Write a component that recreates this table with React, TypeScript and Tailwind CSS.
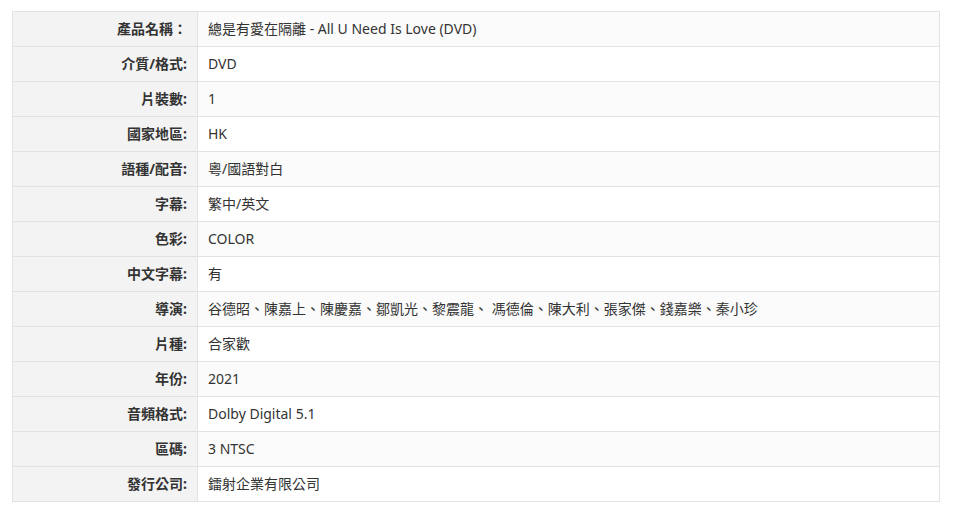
import React from 'react';

const rows: [string, string][] = [
  ['產品名稱：', '總是有愛在隔離 - All U Need Is Love (DVD)'],
  ['介質/格式:', 'DVD'],
  ['片裝數:', '1'],
  ['國家地區:', 'HK'],
  ['語種/配音:', '粵/國語對白'],
  ['字幕:', '繁中/英文'],
  ['色彩:', 'COLOR'],
  ['中文字幕:', '有'],
  ['導演:', '谷德昭、陳嘉上、陳慶嘉、鄒凱光、黎震龍、 馮德倫、陳大利、張家傑、錢嘉樂、秦小珍'],
  ['片種:', '合家歡'],
  ['年份:', '2021'],
  ['音頻格式:', 'Dolby Digital 5.1'],
  ['區碼:', '3 NTSC'],
  ['發行公司:', '鐳射企業有限公司'],
];

export default function App() {
  return (
    <div
      className="w-[954px] h-[517px] bg-white pt-[11px] pl-[12px] text-[14px] text-[#333]"
      style={{ fontFamily: '"Noto Sans", "Noto Sans CJK TC", sans-serif' }}
    >
      <table className="w-[928px] border-collapse border border-[#e2e2e2]">
        <tbody>
          {rows.map(([label, value], i) => (
            <tr key={label} className={i % 2 === 0 ? 'bg-[#fbfbfb]' : 'bg-white'}>
              <td className="w-[185px] h-[35px] bg-[#f3f3f3] border border-[#e2e2e2] text-right font-bold pr-[10px] align-middle leading-none">
                {label}
              </td>
              <td className="h-[35px] border border-[#e2e2e2] pl-[10px] align-middle leading-none">
                {value}
              </td>
            </tr>
          ))}
        </tbody>
      </table>
    </div>
  );
}
